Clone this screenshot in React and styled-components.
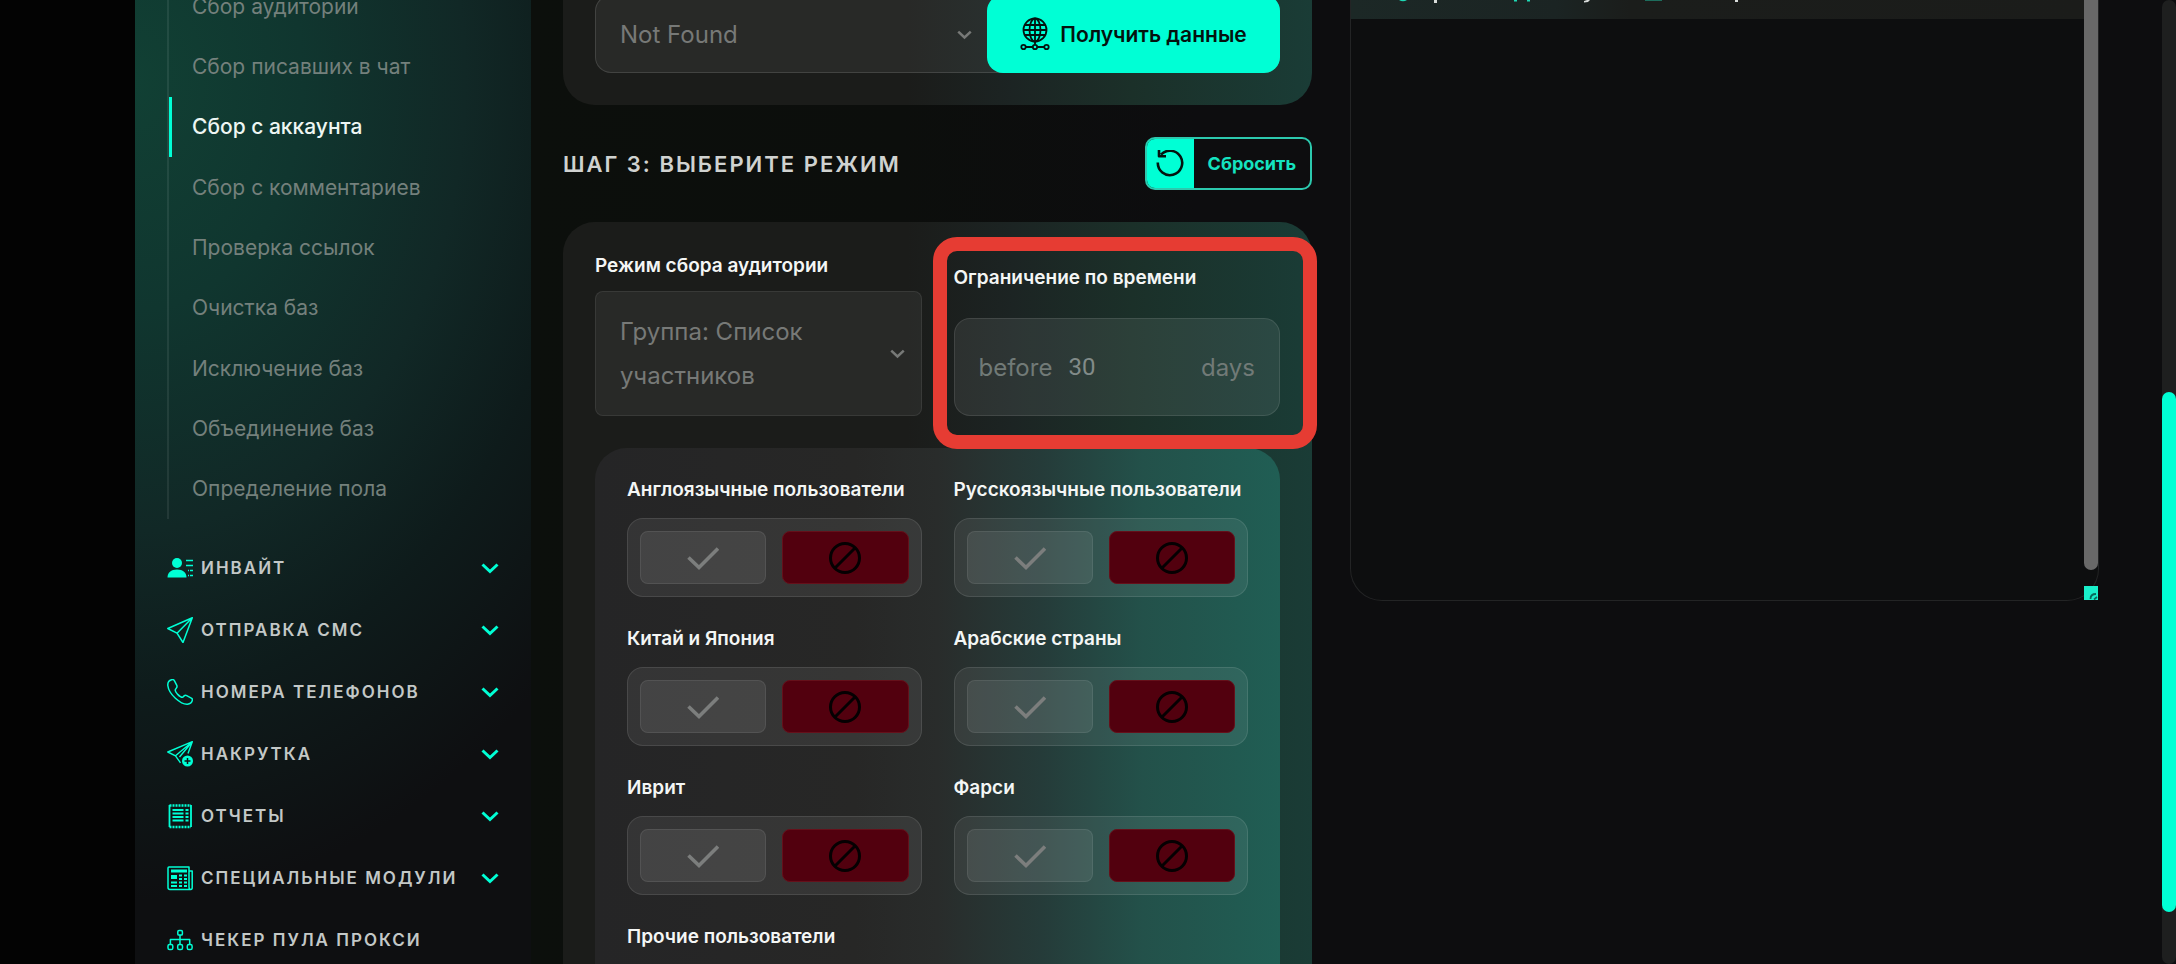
import React from "react";
import styled, { createGlobalStyle } from "styled-components";

const ACCENT = "#00ffd5";

const GlobalStyle = createGlobalStyle`
  *, *::before, *::after { box-sizing: border-box; }
  html, body { margin: 0; overflow: hidden; background: #0d0e0f; }
  body, button, input, select { font-family: Inter, "Noto Sans", sans-serif; }
  ul { list-style: none; margin: 0; padding: 0; }
`;

const Page = styled.div`
  display: flex;
  height: 100vh;
  overflow: hidden;
  padding-left: 135px;
  background: linear-gradient(90deg, #030303 135px, #0c0f0c 531px, #0c0e0c 900px, #0d0d0f 1200px);
`;

/* ---------- sidebar ---------- */
const Sidebar = styled.nav`
  flex: none;
  width: 396px;
  padding: 0 32px;
  background: radial-gradient(
    600px 820px at 0 80px,
    #114034 0%,
    #10362f 28%,
    #112826 55%,
    #0e1b1b 75%,
    #0e0f11 100%
  );
`;

const SubList = styled.ul`
  display: flex;
  flex-direction: column;
  height: 543px;
  margin-top: -24px;
  margin-bottom: 18px;
  border-left: 2px solid rgba(255, 255, 255, 0.08);
`;

const SubItem = styled.li`
  flex: 1;
  display: flex;
`;

const SubLink = styled.a`
  flex: 1;
  display: flex;
  align-items: center;
  padding-left: 20px;
  border-left: 3px solid ${(p) => (p.$active ? ACCENT : "transparent")};
  color: ${(p) => (p.$active ? "#eef6f3" : "#74807c")};
  font-size: 21px;
  font-weight: ${(p) => (p.$active ? 500 : 400)};
  text-decoration: none;
  white-space: nowrap;
`;

const GroupButton = styled.button`
  display: flex;
  align-items: center;
  gap: 8px;
  width: 100%;
  height: 62px;
  padding: 0;
  border: 0;
  background: none;
  color: #c3c8c7;
  font-size: 17px;
  font-weight: 600;
  letter-spacing: 2px;
  text-transform: uppercase;
  text-align: left;
  white-space: nowrap;
  svg { flex: none; color: ${ACCENT}; }
`;

const GroupLabel = styled.span`
  flex: 1;
`;

/* ---------- content ---------- */
const Content = styled.div`
  flex: 1;
  min-width: 0;
  display: grid;
  grid-template-columns: minmax(0, 1fr) minmax(0, 1fr);
  align-items: start;
  gap: 38px;
  padding: 0 63px 0 32px;
`;

const Card = styled.section`
  padding: 32px;
  border-radius: ${(p) => (p.$cut ? "0 0 32px 32px" : "32px")};
  background: linear-gradient(90deg, #1b1c1a 0%, #1b1c1a 46%, #1c2423 60%, #1b3029 76%, #1a3c36 100%);
`;

const SourceCard = styled(Card)`
  padding-top: 0;
`;

const SourceRow = styled.div`
  display: flex;
  height: 78px;
  margin-top: -5px;
  border: 1px solid rgba(255, 255, 255, 0.12);
  border-radius: 16px;
  background: rgba(255, 255, 255, 0.06);
`;

const SelectWrap = styled.div`
  position: relative;
  flex: 1;
  min-width: 0;
  display: flex;
  align-items: center;
  padding-right: 16px;
  color: #777977;
  svg { flex: none; }
`;

const SourceSelect = styled.select`
  flex: 1;
  min-width: 0;
  height: 100%;
  padding: 0 24px;
  border: 0;
  appearance: none;
  background: none;
  color: inherit;
  font-size: 24px;
  font-weight: 400;
`;

const FetchButton = styled.button`
  display: flex;
  align-items: center;
  justify-content: center;
  gap: 10px;
  flex: none;
  width: 293px;
  margin: -1px;
  border: 0;
  border-radius: 16px;
  background: ${ACCENT};
  color: #04130f;
  font-size: 21px;
  font-weight: 600;
`;

const StepHead = styled.header`
  display: flex;
  align-items: center;
  justify-content: space-between;
  margin: 32px 0;
`;

const StepTitle = styled.h2`
  margin: 0;
  color: #d0d2d0;
  font-size: 22px;
  font-weight: 600;
  letter-spacing: 2px;
  text-transform: uppercase;
`;

const ResetButton = styled.button`
  display: flex;
  height: 53px;
  padding: 0;
  border: 2px solid #2cc9ae;
  border-radius: 10px;
  overflow: hidden;
  background: none;
  color: #14e3c0;
  font-size: 18px;
  font-weight: 700;
`;

const ResetIcon = styled.span`
  display: grid;
  place-items: center;
  width: 47px;
  height: 100%;
  background: ${ACCENT};
  color: #04130f;
`;

const ResetText = styled.span`
  align-self: center;
  padding: 0 14px;
`;

const ModeRow = styled.div`
  display: grid;
  grid-template-columns: minmax(0, 1fr) minmax(0, 1fr);
  gap: 32px;
  height: 162px;
`;

const Field = styled.div`
  position: relative;
  display: flex;
  flex-direction: column;
  padding-top: ${(p) => p.$top || 0}px;
  gap: ${(p) => p.$gap}px;
`;

const FieldLabel = styled.label`
  color: #f4f6f5;
  font-size: 19px;
  font-weight: 600;
  line-height: 24px;
  white-space: nowrap;
`;

const ModeBox = styled(SelectWrap)`
  justify-content: space-between;
  padding: 0 16px 0 24px;
  border: 1px solid rgba(255, 255, 255, 0.08);
  border-radius: 8px;
  background: rgba(255, 255, 255, 0.06);
  font-size: 24px;
  font-weight: 400;
  line-height: 44px;
  &:focus-within { border-color: ${ACCENT}; }
`;

const ModeValue = styled.span`
  max-width: 220px;
`;

const HiddenSelect = styled.select`
  position: absolute;
  inset: 0;
  width: 100%;
  opacity: 0;
`;

const Highlight = styled.div`
  position: absolute;
  inset: -17px -37px -33px -21px;
  border: 14px solid #e63c33;
  border-radius: 24px;
  pointer-events: none;
`;

const DaysBox = styled.div`
  flex: 1;
  display: flex;
  align-items: center;
  gap: 16px;
  padding: 0 24px;
  border: 1px solid rgba(255, 255, 255, 0.1);
  border-radius: 16px;
  background: rgba(255, 255, 255, 0.08);
  color: #717a77;
  font-size: 24px;
`;

const DaysInput = styled.input`
  flex: 1;
  min-width: 0;
  padding: 0;
  border: 0;
  outline: 0;
  background: none;
  color: #828b89;
  font-family: Roboto, sans-serif;
  font-size: 24px;
  appearance: textfield;
  &::-webkit-inner-spin-button { appearance: none; }
`;

const Audience = styled.div`
  display: grid;
  grid-template-columns: minmax(0, 1fr) minmax(0, 1fr);
  gap: 30px 32px;
  margin-top: 32px;
  padding: 30px 32px;
  border-radius: 32px;
  background: linear-gradient(90deg, #252526 0%, #272726 38%, #292c2b 50%, #253b39 65%, #23514a 80%, #205e54 100%);
`;

const Group = styled.fieldset`
  min-width: 0;
  margin: 0;
  padding: 0;
  border: 0;
`;

const GroupTitle = styled.legend`
  padding: 0;
  margin-bottom: 16px;
  color: #f4f6f5;
  font-size: 19px;
  font-weight: 600;
  line-height: 24px;
  white-space: nowrap;
`;

const Toggle = styled.div`
  display: grid;
  grid-template-columns: 1fr 1fr;
  gap: 16px;
  padding: 12px;
  border: 1px solid rgba(255, 255, 255, 0.1);
  border-radius: 16px;
  background: rgba(255, 255, 255, 0.07);
`;

const Choice = styled.label`
  position: relative;
  display: grid;
  place-items: center;
  height: 53px;
  border-radius: 8px;
  border: 1px solid ${(p) => (p.$deny ? "#65101a" : "rgba(255, 255, 255, 0.08)")};
  background: ${(p) => (p.$deny ? "#52000e" : "rgba(255, 255, 255, 0.08)")};
  color: ${(p) => (p.$deny ? "#050002" : "#7c7e7d")};
  input { position: absolute; inset: 0; margin: 0; opacity: 0; }
`;

/* ---------- log panel ---------- */
const LogPanel = styled.section`
  display: grid;
  grid-template-columns: minmax(0, 1fr) 14px;
  height: 601px;
  border: 1px solid #232425;
  border-top: 0;
  border-radius: 0 0 32px 32px;
  background: #0d0e0f;
`;

const LogHead = styled.div`
  height: 19px;
  overflow: hidden;
  background: linear-gradient(90deg, #1c2826 0%, #1b2423 28%, #1b1d1b 38%, #1b1c1a 100%);
`;

const LogRail = styled.div`
  display: flex;
  flex-direction: column;
  justify-content: space-between;
`;

const LogThumb = styled.div`
  height: 570px;
  border-radius: 0 0 7px 7px;
  background: #686868;
`;

const PageTrack = styled.div`
  flex: none;
  width: 14px;
  padding-top: 392px;
  border-radius: 7px;
  background: #1e1f1f;
`;

const PageThumb = styled.div`
  height: 520px;
  border-radius: 7px;
  background: ${ACCENT};
`;

/* ---------- icons ---------- */
const Icon = ({ size = 26, box = 26, children, ...rest }) => (
  <svg width={size} height={size} viewBox={`0 0 ${box} ${box}`} fill="none" stroke="currentColor"
    strokeWidth="1.5" strokeLinejoin="round" aria-hidden="true" {...rest}>
    {children}
  </svg>
);

const Chevron = ({ size = 18, weight = 3 }) => (
  <Icon size={size} box={18} strokeWidth={weight} strokeLinejoin="miter">
    <path d="M1.5 5.5 9 12.5l7.500-7" />
  </Icon>
);

const InviteIcon = () => (
  <Icon>
    <circle cx="10" cy="8" r="5" fill="currentColor" stroke="none" />
    <path d="M0.500 22.500C0.500 17.500 4 14.500 10 14.500s9.500 3 9.500 8z" fill="currentColor" stroke="none" />
    <path d="M19 5.500h7M19 10.500h7M21 15.500h1m1 0h3M21 20.500h1m1 0h3" strokeWidth="1.300" />
  </Icon>
);
const PlaneIcon = () => (
  <Icon>
    <path d="M25.300.700.800 11.500l9.200 4.700 6 9.300zM25.300.700 10 16.200" strokeWidth="1.500" />
  </Icon>
);
const PhoneIcon = () => (
  <Icon>
    <path d="M4.500.8C2 1.600.6 3.800.800 6.500c.5 4 3.500 9 7.600 12.700 4 3.600 8.600 6.300 12.100 6 2.300-.2 4.200-1.600 4.800-3.700.3-1-.1-1.900-1-2.400l-4.600-2.500c-.9-.5-1.900-.4-2.600.3l-1.300 1.300c-1 .5-3.500-1.200-5.100-2.800-1.600-1.700-2.700-3.900-2.400-4.700l1.200-1.800c.6-.8.7-1.700.3-2.600L7.500 1.800C6.900.700 5.700.400 4.500.8z" />
  </Icon>
);
const PlanePlusIcon = () => (
  <Icon>
    <path d="M21 12.500 25.300.700.800 11l7.700 3.800 5 7M25.300.700 8.500 14.800M25.300.700 12.500 16" strokeWidth="1.400" />
    <circle cx="20.500" cy="20" r="5.500" fill="currentColor" stroke="none" />
    <path d="M20.500 17v6M17.500 20h6" stroke="#0e1516" strokeWidth="1.500" />
  </Icon>
);
const ReportIcon = () => (
  <Icon>
    <path d="M2.500 2v22M24 2v22" strokeWidth="1.800" />
    <path d="M2.500 2.500h21.500M2.500 24h21.500" strokeDasharray="2 1" strokeWidth="2.400" />
    <path d="M5.500 7h11M5.500 10.500h11M5.500 14h11M5.500 17.500h11M18.500 7h3M18.500 10.500h3M18.500 14h3M18.500 17.500h3" strokeWidth="2" />
  </Icon>
);
const NewsIcon = () => (
  <Icon>
    <path d="M2 2h20v20c0 1.500.8 2.500 1.800 2.500H3c-1.200 0-2-.8-2-2V3c0-.6.400-1 1-1zM22.500 6h2.700v16.500c0 1.200-.6 2-1.400 2" />
    <path d="M4 6h16" strokeWidth="3" />
    <path d="M4 12h6" strokeWidth="4" />
    <path d="M12 10.500h3m2 0h3M12 14h3m2 0h3M4 17.500h6m2 0h3m2 0h3M4 21h6m2 0h3m2 0h3" strokeWidth="1.800" />
  </Icon>
);
const NetworkIcon = () => (
  <Icon>
    <rect x="10.800" y="3.500" width="4.600" height="4.600" rx="1.200" />
    <rect x="1" y="17.500" width="4.800" height="5" rx="1.600" />
    <rect x="10.700" y="17.500" width="4.800" height="5" rx="1.600" />
    <rect x="20.300" y="17.500" width="4.800" height="5" rx="1.600" />
    <path d="M13 8v9M3.400 17v-4.500h19.300V17" />
  </Icon>
);
const GlobeIcon = () => (
  <svg width="30" height="34" viewBox="0 0 30 34" fill="none" stroke="currentColor" strokeWidth="1.8" aria-hidden="true">
    <circle cx="15" cy="13" r="11.500" />
    <ellipse cx="15" cy="13" rx="5.500" ry="11.500" />
    <path d="M15 1.500v26M5 8h20M3.500 13h23M5 18h20M5.500 30h7M17.500 30h7" />
    <circle cx="3.500" cy="30" r="2.200" />
    <circle cx="15" cy="30" r="2.200" />
    <circle cx="26.500" cy="30" r="2.200" />
  </svg>
);
const UndoIcon = () => (
  <Icon size={28} box={28} strokeWidth="2.600">
    <path d="M1.800 12.500A12.200 12.200 0 1 0 5 4.700M3 0v6.200h7" />
  </Icon>
);
const CheckIcon = () => (
  <Icon size={32} box={32} strokeWidth="3.600" strokeLinejoin="miter">
    <path d="M1.500 15.500 12 25.500 31 6.500" />
  </Icon>
);
const BanIcon = () => (
  <Icon size={32} box={32} strokeWidth="3">
    <circle cx="16" cy="16" r="14.500" />
    <path d="M6 26 26 6" />
  </Icon>
);
const MarksSvg = styled.svg`
  display: block;
  margin-left: 36px;
`;
const LogHeadMarks = () => (
  <MarksSvg width="400" height="6" viewBox="0 0 400 6" aria-hidden="true">
    <g fill="#1ed8b4">
      <path d="M12 0h8q-4 2.500-8 0zM127 0h3v1.500h-3zM140 0h3v1.500h-3z" />
    </g>
    <path d="M258 0h17v1h-17z" fill="#1d6c5c" />
    <path d="M47 0h3v3h-3zM348 0h3v2h-3zM200 0h3l-2 2-4 .500v-1.500z" fill="#d8dcda" />
  </MarksSvg>
);

/* ---------- data ---------- */
const subItems = [
  "Сбор аудитории",
  "Сбор писавших в чат",
  "Сбор с аккаунта",
  "Сбор с комментариев",
  "Проверка ссылок",
  "Очистка баз",
  "Исключение баз",
  "Объединение баз",
  "Определение пола",
];

const groups = [
  { label: "Инвайт", icon: InviteIcon },
  { label: "Отправка смс", icon: PlaneIcon },
  { label: "Номера телефонов", icon: PhoneIcon },
  { label: "Накрутка", icon: PlanePlusIcon },
  { label: "Отчеты", icon: ReportIcon },
  { label: "Специальные модули", icon: NewsIcon },
  { label: "Чекер пула прокси", icon: NetworkIcon, leaf: true },
];

const audiences = [
  "Англоязычные пользователи",
  "Русскоязычные пользователи",
  "Китай и Япония",
  "Арабские страны",
  "Иврит",
  "Фарси",
  "Прочие пользователи",
];

const AudienceToggle = ({ title, name }) => (
  <Group>
    <GroupTitle>{title}</GroupTitle>
    <Toggle>
      <Choice>
        <input type="radio" name={name} value="allow" aria-label="Да" />
        <CheckIcon />
      </Choice>
      <Choice $deny>
        <input type="radio" name={name} value="deny" aria-label="Нет" defaultChecked />
        <BanIcon />
      </Choice>
    </Toggle>
  </Group>
);

export default function App() {
  return (
    <>
      <GlobalStyle />
      <Page>
        <Sidebar>
          <SubList>
            {subItems.map((text) => (
              <SubItem key={text}>
                <SubLink href="#" $active={text === "Сбор с аккаунта"}>{text}</SubLink>
              </SubItem>
            ))}
          </SubList>
          {groups.map(({ label, icon: GroupIcon, leaf }) => (
            <GroupButton key={label} type="button">
              <GroupIcon />
              <GroupLabel>{label}</GroupLabel>
              {!leaf && <Chevron />}
            </GroupButton>
          ))}
        </Sidebar>

        <Content>
          <main>
            <SourceCard $cut>
              <SourceRow>
                <SelectWrap>
                  <SourceSelect aria-label="Источник" defaultValue="none">
                    <option value="none">Not Found</option>
                  </SourceSelect>
                  <Chevron size={15} />
                </SelectWrap>
                <FetchButton type="button">
                  <GlobeIcon />
                  Получить данные
                </FetchButton>
              </SourceRow>
            </SourceCard>

            <StepHead>
              <StepTitle>Шаг 3: выберите режим</StepTitle>
              <ResetButton type="button">
                <ResetIcon><UndoIcon /></ResetIcon>
                <ResetText>Сбросить</ResetText>
              </ResetButton>
            </StepHead>

            <Card>
              <ModeRow>
                <Field $gap={13}>
                  <FieldLabel htmlFor="mode">Режим сбора аудитории</FieldLabel>
                  <ModeBox>
                    <ModeValue aria-hidden="true">Группа: Список участников</ModeValue>
                    <Chevron size={15} />
                    <HiddenSelect id="mode" defaultValue="members">
                      <option value="members">Группа: Список участников</option>
                    </HiddenSelect>
                  </ModeBox>
                </Field>
                <Field $gap={28} $top={12}>
                  <FieldLabel htmlFor="days">Ограничение по времени</FieldLabel>
                  <DaysBox>
                    <span>before</span>
                    <DaysInput id="days" type="number" defaultValue={30} />
                    <span>days</span>
                  </DaysBox>
                  <Highlight />
                </Field>
              </ModeRow>
              <Audience>
                {audiences.map((title, i) => (
                  <AudienceToggle key={title} title={title} name={`audience-${i}`} />
                ))}
              </Audience>
            </Card>
          </main>

          <LogPanel aria-label="Журнал">
            <LogHead><LogHeadMarks /></LogHead>
            <LogRail>
              <LogThumb />
              <svg width="14" height="14" viewBox="0 0 14 14" aria-hidden="true">
                <path d="M0 0h14v14H0z" fill="#19efca" />
                <path d="M6.500 13c0-3 2-5 5.500-5M10 13.500l3-2.500" stroke="#0a6a5b" strokeWidth="1.800" fill="none" />
              </svg>
            </LogRail>
          </LogPanel>
        </Content>

        <PageTrack><PageThumb /></PageTrack>
      </Page>
    </>
  );
}
